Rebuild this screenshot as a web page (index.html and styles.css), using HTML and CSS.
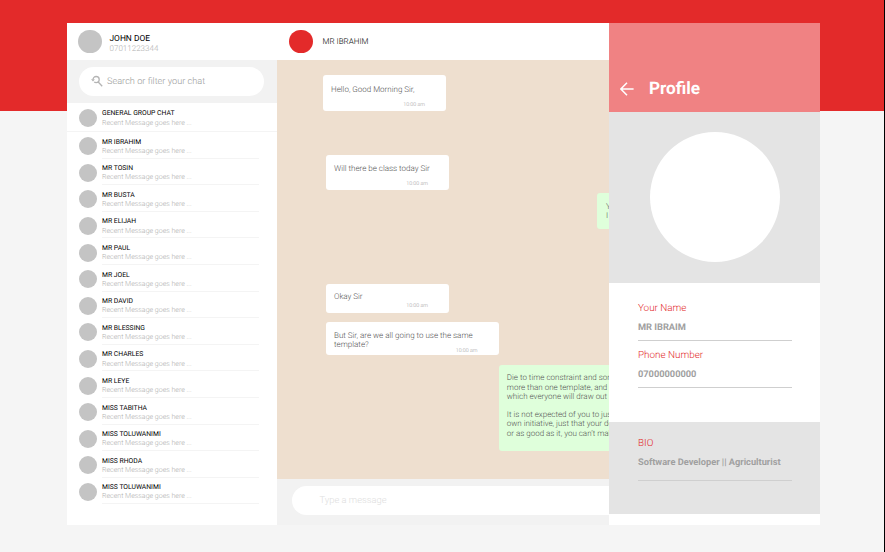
FILE: index.html
```html
<!DOCTYPE html>
<html lang="en">
<head>
<meta charset="utf-8">
<title>Chat</title>
<link rel="stylesheet" href="styles.css">
</head>
<body>
<main class="app">
  <aside class="sidebar">
    <header class="me">
      <span class="avatar avatar-lg"></span>
      <div><p class="me-name">JOHN DOE</p><p class="me-phone">07011223344</p></div>
    </header>
    <div class="search-bar">
      <div class="search">
        <svg class="search-icon" viewBox="0 0 12 12" fill="none" stroke="#b4b4b4" stroke-width="1.3"><path d="M2 4.6A3.1 3.1 0 1 1 5.1 7.7Q4 7.7 3.2 7.1M7.2 7L11.2 11.2"/><path d="M0 4.2H3.9L2 6.5Z" fill="#b4b4b4" stroke="none"/></svg>
        <span>Search or filter your chat</span>
      </div>
    </div>
    <ul class="chats">
      <li class="chat general"><span class="avatar"></span><div class="info"><p class="name">GENERAL GROUP CHAT</p><p class="recent">Recent Message goes here ...</p></div></li>
      <li class="chat"><span class="avatar"></span><div class="info"><p class="name">MR IBRAHIM</p><p class="recent">Recent Message goes here ...</p></div></li>
      <li class="chat"><span class="avatar"></span><div class="info"><p class="name">MR TOSIN</p><p class="recent">Recent Message goes here ...</p></div></li>
      <li class="chat"><span class="avatar"></span><div class="info"><p class="name">MR BUSTA</p><p class="recent">Recent Message goes here ...</p></div></li>
      <li class="chat"><span class="avatar"></span><div class="info"><p class="name">MR ELIJAH</p><p class="recent">Recent Message goes here ...</p></div></li>
      <li class="chat"><span class="avatar"></span><div class="info"><p class="name">MR PAUL</p><p class="recent">Recent Message goes here ...</p></div></li>
      <li class="chat"><span class="avatar"></span><div class="info"><p class="name">MR JOEL</p><p class="recent">Recent Message goes here ...</p></div></li>
      <li class="chat"><span class="avatar"></span><div class="info"><p class="name">MR DAVID</p><p class="recent">Recent Message goes here ...</p></div></li>
      <li class="chat"><span class="avatar"></span><div class="info"><p class="name">MR BLESSING</p><p class="recent">Recent Message goes here ...</p></div></li>
      <li class="chat"><span class="avatar"></span><div class="info"><p class="name">MR CHARLES</p><p class="recent">Recent Message goes here ...</p></div></li>
      <li class="chat"><span class="avatar"></span><div class="info"><p class="name">MR LEYE</p><p class="recent">Recent Message goes here ...</p></div></li>
      <li class="chat"><span class="avatar"></span><div class="info"><p class="name">MISS TABITHA</p><p class="recent">Recent Message goes here ...</p></div></li>
      <li class="chat"><span class="avatar"></span><div class="info"><p class="name">MISS TOLUWANIMI</p><p class="recent">Recent Message goes here ...</p></div></li>
      <li class="chat"><span class="avatar"></span><div class="info"><p class="name">MISS RHODA</p><p class="recent">Recent Message goes here ...</p></div></li>
      <li class="chat"><span class="avatar"></span><div class="info"><p class="name">MISS TOLUWANIMI</p><p class="recent">Recent Message goes here ...</p></div></li>
    </ul>
  </aside>
  <section class="conversation">
    <header class="peer"><span class="avatar avatar-lg avatar-red"></span><span>MR IBRAHIM</span></header>
    <div class="messages">
      <div class="msg hello"><p>Hello, Good Morning Sir,</p><time>10:00 am</time></div>
      <div class="msg class-today"><p>Will there be class today Sir</p><time>10:00 am</time></div>
      <div class="msg mine yes"><p>Y<br>I</p></div>
      <div class="msg okay"><p>Okay Sir</p><time>10:00 am</time></div>
      <div class="msg template"><p>But Sir, are we all going to use the same<br>template?</p><time>10:00 am</time></div>
      <div class="msg mine long"><p>Die to time constraint and som<br>more than one template, and<br>which everyone will draw out</p><p>It is not expected of you to just<br>own initiative, just that your de<br>or as good as it, you can’t mak</p></div>
    </div>
    <footer class="composer"><div class="input">Type a message</div></footer>
  </section>
  <aside class="profile">
    <header class="profile-head">
      <svg class="back" viewBox="0 0 14 14" fill="none" stroke="#fff" stroke-width="1.5"><path d="M13.6 7H1M7 .8L.9 7L7 13.2"/></svg>
      <h1>Profile</h1>
    </header>
    <div class="photo-area"><span class="photo"></span></div>
    <div class="fields">
      <div class="field"><p class="label">Your Name</p><p class="value">MR IBRAIM</p></div>
      <div class="field phone"><p class="label">Phone Number</p><p class="value">07000000000</p></div>
    </div>
    <div class="bio">
      <div class="field"><p class="label">BIO</p><p class="value">Software Developer || Agriculturist</p></div>
    </div>
  </aside>
</main>
</body>
</html>
```
FILE: styles.css
```css
* { box-sizing: border-box; margin: 0; padding: 0; }
body {
  width: 885px;
  height: 552px;
  overflow: hidden;
  padding: 23px 0 0 66.5px;
  border-right: 1px solid #000;
  background: linear-gradient(#e32a2a 111px, #f5f5f5 111px);
  font-family: Roboto, sans-serif;
  font-weight: 300;
  text-rendering: geometricPrecision;
}
.app { display: grid; grid-template-columns: 210.5px 332px 211px; width: 753.5px; height: 501.7px; }
.avatar { flex: none; width: 18px; height: 18px; border-radius: 50%; background: #c4c4c4; }
.avatar-lg { width: 23.5px; height: 23.5px; }
.avatar-red { background: #e32a2a; }

.sidebar { background: #fff; }
.me { display: flex; align-items: center; gap: 8px; height: 37px; padding-left: 11.5px; }
.me div { padding-top: 5px; }
.me-name { font-size: 8.4px; line-height: 9px; font-weight: 400; color: #000; }
.me-phone { font-size: 8px; line-height: 9px; color: #b0b0b0; }
.search-bar { height: 43px; padding: 6.5px 13px 0 12.5px; background: #f2f2f2; }
.search { display: flex; align-items: center; gap: 4px; height: 29px; padding-left: 12px; border-radius: 15px; background: #fff; font-size: 9.2px; color: #999; }
.search-icon { width: 12px; height: 12px; }
.chats { list-style: none; }
.chat { display: flex; gap: 5px; height: 26.6px; padding: 5.7px 18.5px 0 12.5px; }
.info { flex: 1; height: 21.3px; border-bottom: 1px solid #f4f4f4; }
.name { margin-top: .3px; font-size: 6.8px; line-height: 9px; font-weight: 400; color: #000; }
.recent { margin-top: .2px; font-size: 7px; line-height: 9px; color: #b0b0b0; }
.general { height: 28.6px; padding-top: 6.2px; border-bottom: 1px solid #f4f4f4; }
.general .info { border: 0; }

.conversation { display: flex; flex-direction: column; min-width: 0; overflow: hidden; }
.peer { display: flex; align-items: center; gap: 10px; height: 37px; padding-left: 12px; background: #fff; font-size: 8.05px; color: #000; }
.messages { display: flex; flex-direction: column; align-items: flex-start; height: 418.5px; padding: 15.4px 0 0 45.5px; background: #eedfcf; }
.msg { flex: none; width: 123.5px; height: 35.5px; padding: 9.4px 8.5px 0; border-radius: 3px; background: #fff; font-size: 8px; line-height: 9.2px; color: #555; white-space: nowrap; }
.msg time { display: block; margin: 7.9px 12.5px 0 0; text-align: right; font-size: 5.3px; line-height: 6px; color: #999; }
.class-today { margin: 44px 0 0 3px; }
.yes { margin: 2.7px 0 0 274px; padding: 8.5px 0 0 9.5px; }
.okay { height: 29.5px; margin: 55.3px 0 0 3px; padding-top: 8px; }
.okay time { margin-top: 2.2px; }
.template { width: 173px; height: 33.5px; margin: 8.3px 0 0 3px; padding-top: 9px; }
.template time { margin-top: -.8px; }
.mine { background: #dfffdb; }
.long { width: 200px; height: 86px; margin: 9.7px 0 0 176.3px; padding: 8.5px 0 0 8px; }
.long p + p { margin-top: 9.2px; }
.composer { flex: 1; padding: 7.5px 0 0 14.5px; background: #f2f2f2; }
.input { height: 28.5px; padding-left: 28px; border-radius: 15px 0 0 15px; background: #fff; font-size: 9.4px; line-height: 29px; color: #dedede; }

.profile { background: #fff; }
.profile-head { display: flex; align-items: flex-end; gap: 15px; height: 89px; padding: 0 0 13px 11px; background: #f08283; color: #fff; }
.back { width: 14px; height: 14px; margin-bottom: 3.5px; }
.profile-head h1 { font-size: 17.2px; line-height: 20px; font-weight: 700; }
.photo-area { display: flex; justify-content: center; height: 170.5px; padding-top: 19.5px; background: #e4e4e4; }
.photo { width: 130px; height: 130px; border-radius: 50%; background: #fff; }
.fields { height: 139px; padding: 20px 28px 0 29px; }
.field { height: 38px; padding-top: .5px; border-bottom: 1px solid #cfcfcf; }
.phone { margin-top: 9px; }
.label { font-size: 9.9px; line-height: 12px; color: #e32a2a; }
.value { margin-top: 7px; font-size: 9.25px; line-height: 12px; font-weight: 700; color: #a0a0a0; }
.bio { height: 92.5px; padding: 16px 28px 0 29px; background: #e4e4e4; }
.bio .field { height: 43px; }
```
